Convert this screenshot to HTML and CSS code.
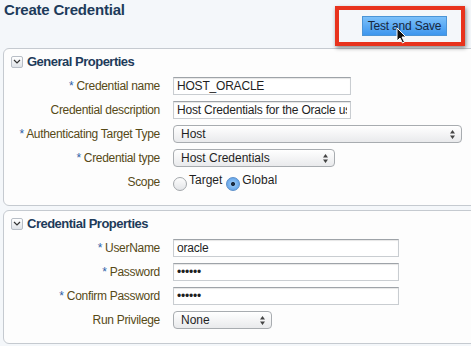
FILE: index.html
```html
<!DOCTYPE html>
<html lang="en">
<head>
    <meta charset="UTF-8">
    <title>Create Credential</title>
    <link rel="stylesheet" href="styles.css">
</head>
<body>
    <div class="top">
        <h1 class="title">Create Credential</h1>
        <div class="callout">
            <button class="save">Test and Save</button>
            <svg class="cursor" width="12" height="17" viewBox="0 0 12 17">
                <path d="M1 1 L1 14 L4 11 L6.5 16 L8.5 15 L6 10 L10 10 Z" fill="#111" stroke="#fff" stroke-width="1"/>
            </svg>
        </div>
    </div>

    <div class="panel">
        <div class="panel-head">
            <span class="toggle"><svg width="8" height="5" viewBox="0 0 8 5"><path d="M1 1 L4 4 L7 1" fill="none" stroke="#333" stroke-width="1.2"/></svg></span>
            General Properties
        </div>
        <div class="row">
            <label><span class="req">*</span> Credential name</label>
            <input type="text" class="field w-name" value="HOST_ORACLE">
        </div>
        <div class="row">
            <label>Credential description</label>
            <input type="text" class="field w-name" value="Host Credentials for the Oracle user">
        </div>
        <div class="row">
            <label><span class="req">*</span> Authenticating Target Type</label>
            <div class="select w-target">Host<svg class="arrows" width="5" height="9" viewBox="0 0 5 9"><path d="M2.5 0 L5 3.5 L0 3.5 Z M2.5 9 L5 5.5 L0 5.5 Z" fill="#444"/></svg></div>
        </div>
        <div class="row">
            <label><span class="req">*</span> Credential type</label>
            <div class="select w-type">Host Credentials<svg class="arrows" width="5" height="9" viewBox="0 0 5 9"><path d="M2.5 0 L5 3.5 L0 3.5 Z M2.5 9 L5 5.5 L0 5.5 Z" fill="#444"/></svg></div>
        </div>
        <div class="row">
            <label>Scope</label>
            <div class="radios">
                <span class="radio"></span><span class="rtext">Target</span>
                <span class="radio on"></span><span class="rtext">Global</span>
            </div>
        </div>
    </div>

    <div class="panel">
        <div class="panel-head">
            <span class="toggle"><svg width="8" height="5" viewBox="0 0 8 5"><path d="M1 1 L4 4 L7 1" fill="none" stroke="#333" stroke-width="1.2"/></svg></span>
            Credential Properties
        </div>
        <div class="row">
            <label><span class="req">*</span> UserName</label>
            <input type="text" class="field w-user" value="oracle">
        </div>
        <div class="row">
            <label><span class="req">*</span> Password</label>
            <input type="password" class="field w-user" value="oracle">
        </div>
        <div class="row">
            <label><span class="req">*</span> Confirm Password</label>
            <input type="password" class="field w-user" value="oracle">
        </div>
        <div class="row">
            <label>Run Privilege</label>
            <div class="select w-priv">None<svg class="arrows" width="5" height="9" viewBox="0 0 5 9"><path d="M2.5 0 L5 3.5 L0 3.5 Z M2.5 9 L5 5.5 L0 5.5 Z" fill="#444"/></svg></div>
        </div>
    </div>
</body>
</html>
```

FILE: styles.css
```css
*{
    margin: 0px;
    padding: 0px;
    box-sizing: border-box;
}
body{
    background-color: #f4f7fa;
    font-family: "Liberation Sans", Arial, sans-serif;
    font-size: 12px;
    width: 471px;
    height: 346px;
    overflow: hidden;
}
.top{
    display: flex;
    justify-content: space-between;
    align-items: flex-start;
    height: 48px;
}
.title{
    color: #1d3b5a;
    font-size: 15px;
    font-weight: bold;
    margin: 1px 0 0 4px;
    letter-spacing: -0.2px;
}
.callout{
    position: relative;
    margin: 6px 6px 0 0;
    width: 130px;
    height: 40px;
    border: 4px solid #e8331d;
    box-shadow: 1px 2px 4px rgba(0, 0, 0, 0.45);
    display: flex;
    align-items: center;
    justify-content: flex-end;
    padding-right: 14px;
}
.save{
    width: 85px;
    height: 20px;
    border: 1px solid #4b94d6;
    background: linear-gradient(#7cc0fa, #3d96ee);
    color: #18283e;
    font-family: "Liberation Sans", Arial, sans-serif;
    font-size: 12px;
    letter-spacing: -0.2px;
}
.cursor{
    position: absolute;
    left: 57px;
    top: 17px;
}
.panel{
    margin: 0 -10px 4px 3px;
    background-color: #fdfdfd;
    border: 1px solid #c5cad0;
    border-radius: 6px;
    padding-bottom: 11px;
}
.panel-head{
    height: 25px;
    display: flex;
    align-items: center;
    gap: 4px;
    padding-left: 7px;
    color: #1d3b5a;
    font-size: 13px;
    font-weight: bold;
    letter-spacing: -0.5px;
}
.toggle{
    width: 12px;
    height: 12px;
    border: 1px solid #b8bec6;
    border-radius: 2px;
    background: linear-gradient(#ffffff, #dfe3e8);
    display: flex;
    align-items: center;
    justify-content: center;
}
.row{
    height: 24px;
    display: grid;
    grid-template-columns: 156px auto;
    column-gap: 13px;
    align-items: center;
}
label{
    text-align: right;
    color: #574a17;
    letter-spacing: -0.3px;
}
.req{
    color: #2f62a8;
}
.field{
    height: 18px;
    border: 1px solid #c9cdd1;
    border-top-color: #9ea3a8;
    background-color: #fff;
    padding: 0 3px;
    font-family: "Liberation Sans", Arial, sans-serif;
    font-size: 12px;
    letter-spacing: -0.2px;
    color: #1f1f1f;
    box-shadow: inset 0 1px 1px rgba(0, 0, 0, 0.1);
}
.w-name{
    width: 178px;
}
.w-user{
    width: 226px;
}
.select{
    height: 18px;
    border: 1px solid #a8acb0;
    border-radius: 4px;
    background: linear-gradient(#ffffff, #e9eaec);
    display: flex;
    justify-content: space-between;
    align-items: center;
    padding: 0 6px 0 7px;
    color: #1f1f1f;
}
.w-target{
    width: 289px;
}
.w-type{
    width: 162px;
}
.w-priv{
    width: 99px;
}
.radios{
    display: flex;
    align-items: center;
    gap: 2px;
}
.radio{
    width: 14px;
    height: 14px;
    border: 1px solid #a3a7ab;
    border-radius: 50%;
    background: linear-gradient(#fdfdfd, #e3e5e8);
    margin-top: 3px;
}
.radio.on{
    border-color: #5b8fca;
    background: radial-gradient(circle, #1b2b40 0, #1b2b40 1.6px, #8dc0f2 2.4px, #4f97e6 100%);
    margin-left: 2px;
}
.rtext{
    color: #1f1f1f;
    margin-top: -4px;
}
```
